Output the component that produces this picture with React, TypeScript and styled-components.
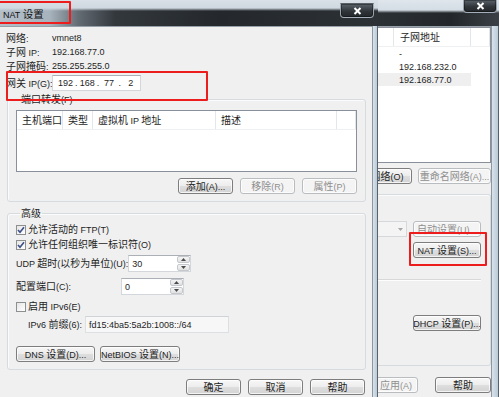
import styled, { createGlobalStyle } from "styled-components";

const GlobalStyle = createGlobalStyle`
  html, body { margin: 0; padding: 0; }
  * { box-sizing: border-box; }
  body {
    width: 499px;
    height: 397px;
    overflow: hidden;
    background: #f0f0f0;
    font-family: "Noto Sans CJK SC", "Liberation Sans", sans-serif;
    font-size: 10px;
    line-height: 12px;
    color: #1e1e1e;
  }
`;

const Desktop = styled.div`
  position: relative;
  display: flex;
  width: 499px;
  height: 397px;
  overflow: hidden;
`;

// latin runs are drawn smaller, like tahoma next to the cjk glyphs
const Latin = styled.span`
  font-family: "Liberation Sans", sans-serif;
  font-size: 9px;
`;

const CJK = /([\u2e80-\u9fff\uff00-\uffef]+)/;

function Txt({ children }: { children: string }) {
  const parts = children.split(CJK);
  return (
    <span>
      {parts.map((part, i) => {
        if (!part) return null;
        if (CJK.test(part)) return <span key={i}>{part}</span>;
        return <Latin key={i}>{part}</Latin>;
      })}
    </span>
  );
}

/* ---------- shared win7 controls ---------- */

const ButtonFace = styled.div<{ $w: number; $off?: boolean }>`
  width: ${(p) => p.$w}px;
  height: 16px;
  flex: none;
  display: flex;
  align-items: center;
  justify-content: center;
  white-space: nowrap;
  overflow: hidden;
  border: 1px solid ${(p) => (p.$off ? "#b9bdc0" : "#7d7d7d")};
  border-radius: 3px;
  color: ${(p) => (p.$off ? "#8f8f8f" : "#1e1e1e")};
  background: ${(p) =>
    p.$off
      ? "#f4f4f4"
      : "linear-gradient(to bottom, #f7f7f7 0%, #ededed 48%, #dedede 52%, #d3d3d3 100%)"};
  box-shadow: inset 0 0 0 1px rgba(255, 255, 255, 0.75);
`;

function Button({ w, off, label }: { w: number; off?: boolean; label: string }) {
  return (
    <ButtonFace $w={w} $off={off}>
      <Txt>{label}</Txt>
    </ButtonFace>
  );
}

const ButtonRow = styled.div<{ $gap: number; $top: number; $right?: number; $start?: boolean }>`
  display: flex;
  justify-content: ${(p) => (p.$start ? "flex-start" : "flex-end")};
  gap: ${(p) => p.$gap}px;
  margin-top: ${(p) => p.$top}px;
  padding-right: ${(p) => p.$right ?? 0}px;
`;

const Field = styled.div<{ $w: number; $ro?: boolean }>`
  width: ${(p) => p.$w}px;
  height: 17px;
  flex: none;
  display: flex;
  align-items: center;
  padding-left: 3px;
  border: 1px solid ${(p) => (p.$ro ? "#dcdfe3" : "#d3d7dc")};
  border-top-color: ${(p) => (p.$ro ? "#cfd3d8" : "#abafb6")};
  background: ${(p) => (p.$ro ? "#f7f7f7" : "#ffffff")};
  white-space: nowrap;
`;

const GroupBox = styled.fieldset<{ $top: number }>`
  margin: ${(p) => p.$top}px 0 0 1px;
  padding: 4px 8px 7px 8px;
  border: 1px solid #d6dbe0;
  border-radius: 3px;
  box-shadow: inset 1px 1px 0 #fbfbfb;
  min-width: 0;
`;

const Legend = styled.legend`
  margin-left: 4px;
  padding: 0 1px;
  line-height: 12px;
  font-size: 10px;
`;

/* ---------- NAT dialog ---------- */

const NatDialog = styled.div`
  width: 378px;
  flex: none;
  display: flex;
  flex-direction: column;
`;

const DialogTitle = styled.div`
  height: 26px;
  flex: none;
  display: flex;
  justify-content: space-between;
  align-items: flex-start;
  background:
    linear-gradient(to bottom, #d9e0e7 0px, #cfd8e0 8px, rgba(207, 216, 224, 0) 11px),
    linear-gradient(to right, #b3bec8 0px, #a6b2bc 50px, #646c74 78px, #33383d 115px, #24282c 220px, #2c3136 100%);
`;

const TitleText = styled.div`
  padding: 8px 0 0 3px;
  font-size: 10.5px;
  color: #111;
`;

const CloseBox = styled.div<{ $h: number; $top: number; $right: number }>`
  width: 34px;
  height: ${(p) => p.$h}px;
  margin: ${(p) => p.$top}px ${(p) => p.$right}px 0 0;
  display: flex;
  align-items: center;
  justify-content: center;
  border: 1px solid rgba(190, 202, 214, 0.75);
  border-top-color: rgba(190, 202, 214, 0.35);
  border-radius: 0 0 4px 4px;
  background: linear-gradient(to bottom, #5b636b 0%, #30353a 55%, #23272b 100%);
  box-shadow: inset 0 0 0 1px rgba(0, 0, 0, 0.35);
`;

const DialogBody = styled.div`
  flex: 1;
  display: flex;
`;

const Client = styled.div`
  width: 372px;
  flex: none;
  padding: 4px 6px 0 6px;
  border-top: 1px solid #98a1a9;
  background: #f0f0f0;
`;

const RightFrame = styled.div<{ $w: number }>`
  width: ${(p) => p.$w}px;
  flex: none;
  border-left: 1px solid #8e969e;
  border-right: 1px solid #59616a;
  background: linear-gradient(to right, #d7e2ec, #bccad6);
`;

const InfoGrid = styled.div`
  display: grid;
  grid-template-columns: 46px auto;
  grid-auto-rows: 14px;
  align-items: center;
  white-space: nowrap;
`;

const GatewayRow = styled.div`
  display: flex;
  align-items: center;
  margin-top: 2px;
  height: 16px;
`;

const GatewayLabel = styled.div`
  width: 46px;
  flex: none;
  white-space: nowrap;
`;

const IpBox = styled.div`
  width: 89px;
  height: 16px;
  display: flex;
  align-items: center;
  padding-left: 3px;
  border: 1px solid #d3d7dc;
  border-top-color: #abafb6;
  background: #fff;
`;

const IpPart = styled(Latin)`
  width: 19px;
  text-align: center;
`;

const IpDot = styled(Latin)`
  width: 3px;
  text-align: center;
`;

const ListView = styled.div`
  height: 62px;
  border: 1px solid #8a9099;
  background: #fff;
`;

const ListHeader = styled.div`
  display: flex;
  height: 19px;
  border-bottom: 1px solid #eef0f2;
`;

const HeaderCell = styled.div<{ $w?: number }>`
  width: ${(p) => (p.$w ? `${p.$w}px` : "auto")};
  flex: ${(p) => (p.$w ? "none" : 1)};
  display: flex;
  align-items: center;
  padding-left: 5px;
  border-right: 1px solid #e3e6ea;
  white-space: nowrap;
`;

const CheckRow = styled.div<{ $top: number }>`
  display: flex;
  align-items: center;
  gap: 2px;
  height: 13px;
  margin-top: ${(p) => p.$top}px;
  white-space: nowrap;
`;

const CheckBox = styled.div`
  width: 10px;
  height: 10px;
  flex: none;
  display: flex;
  align-items: center;
  justify-content: center;
  border: 1px solid #8e8f8f;
  background: linear-gradient(135deg, #e6e6e6, #ffffff);
`;

const SpinRow = styled.div<{ $top: number }>`
  display: flex;
  align-items: center;
  margin-top: ${(p) => p.$top}px;
  white-space: nowrap;
`;

const SpinLabel = styled.div`
  min-width: 105px;
  flex: none;
`;

const SpinBox = styled.div`
  width: 63px;
  display: flex;
  height: 17px;
  border: 1px solid #d3d7dc;
  border-top-color: #abafb6;
  background: #fff;
`;

const SpinText = styled(Latin)`
  flex: 1;
  padding: 2px 0 0 3px;
`;

const SpinArrows = styled.div`
  width: 13px;
  display: flex;
  flex-direction: column;
  gap: 1px;
`;

const SpinArrow = styled.div`
  flex: 1;
  display: flex;
  align-items: center;
  justify-content: center;
  border: 1px solid #c4c8cc;
  border-radius: 2px;
  background: linear-gradient(to bottom, #f5f5f5, #e1e1e1);
`;

const PrefixRow = styled.div`
  display: flex;
  align-items: center;
  gap: 3px;
  margin: 3px 0 0 12px;
  white-space: nowrap;
`;

/* ---------- background virtual network editor ---------- */

const EditorWindow = styled.div`
  flex: 1;
  display: flex;
  flex-direction: column;
  min-width: 0;
`;

const EditorTitle = styled.div`
  height: 26px;
  flex: none;
  display: flex;
  justify-content: flex-end;
  align-items: flex-start;
  background:
    linear-gradient(to bottom, #dfe6ec 0px, #d4dde5 10px, rgba(212, 221, 229, 0) 13px),
    linear-gradient(to right, #2b3035, #23272b 60%, #3a4046);
`;

const EditorBody = styled.div`
  flex: 1;
  display: flex;
  min-height: 0;
`;

const EditorClient = styled.div`
  width: 113px;
  flex: none;
  overflow: hidden;
  border-top: 1px solid #98a1a9;
  background: #f0f0f0;
`;

const NetList = styled.div`
  height: 136px;
  border: 1px solid #8a9099;
  border-left: none;
  background: #fff;
`;

const NetHeader = styled.div`
  display: grid;
  grid-template-columns: 1fr 77px 19px;
  height: 19px;
  border-bottom: 1px solid #eef0f2;
`;

const NetHeaderCell = styled.div`
  display: flex;
  align-items: center;
  padding-left: 6px;
  border-right: 1px solid #e3e6ea;
  white-space: nowrap;
`;

const NetRow = styled.div<{ $sel?: boolean }>`
  height: 13px;
  margin-right: 19px;
  padding-left: 21px;
  display: flex;
  align-items: center;
  background: ${(p) => (p.$sel ? "#efefef" : "transparent")};
  white-space: nowrap;
`;

const ClipRow = styled.div<{ $top: number; $gap: number }>`
  display: flex;
  justify-content: flex-end;
  gap: ${(p) => p.$gap}px;
  margin-top: ${(p) => p.$top}px;
`;

const InfoPanel = styled.div`
  height: 172px;
  margin-top: 10px;
  padding: 26px 9px 0 0;
  border: 1px solid #d6dbe0;
  border-left: none;
  border-radius: 0 3px 3px 0;
  box-shadow: inset 0 1px 0 #fbfbfb;
`;

const Combo = styled.div`
  width: 120px;
  height: 16px;
  flex: none;
  display: flex;
  justify-content: flex-end;
  align-items: center;
  padding-right: 3px;
  border: 1px solid #d6d9dc;
  background: #f4f4f4;
`;

const Separator = styled.div`
  height: 2px;
  margin-top: 21px;
  border-top: 1px solid #d8d8d8;
  border-bottom: 1px solid #fdfdfd;
`;

/* ---------- annotation marks ---------- */

const Mark = styled.div<{ $x: number; $y: number; $w: number; $h: number }>`
  position: absolute;
  left: ${(p) => p.$x}px;
  top: ${(p) => p.$y}px;
  width: ${(p) => p.$w}px;
  height: ${(p) => p.$h}px;
  border: 2px solid #ee1d1d;
  border-radius: 1px;
  pointer-events: none;
`;

function CloseGlyph() {
  return (
    <svg width="9" height="8" viewBox="0 0 9 8">
      <path d="M1.5 1 L7.5 7 M7.5 1 L1.5 7" stroke="#fff" strokeWidth="2" />
    </svg>
  );
}

function Tick() {
  return (
    <svg width="8" height="8" viewBox="0 0 8 8">
      <path d="M1 4 L3 6.3 L7 1.2" stroke="#3d4f86" strokeWidth="1.6" fill="none" />
    </svg>
  );
}

function Tri({ up, color = "#4b4b4b" }: { up?: boolean; color?: string }) {
  return (
    <svg width="5" height="3" viewBox="0 0 5 3">
      <path d={up ? "M0 3 L2.5 0 L5 3 Z" : "M0 0 L5 0 L2.5 3 Z"} fill={color} />
    </svg>
  );
}

function Spinner({ value }: { value: string }) {
  return (
    <SpinBox>
      <SpinText>{value}</SpinText>
      <SpinArrows>
        <SpinArrow>
          <Tri up />
        </SpinArrow>
        <SpinArrow>
          <Tri />
        </SpinArrow>
      </SpinArrows>
    </SpinBox>
  );
}

export default function App() {
  const ip = ["192", "168", "77", "2"];
  const info = [
    ["网络:", "vmnet8"],
    ["子网 IP:", "192.168.77.0"],
    ["子网掩码:", "255.255.255.0"],
  ];

  return (
    <>
      <GlobalStyle />
      <Desktop>
        <NatDialog>
          <DialogTitle>
            <TitleText>
              <Txt>NAT 设置</Txt>
            </TitleText>
            <CloseBox $h={15} $top={3} $right={4}>
              <CloseGlyph />
            </CloseBox>
          </DialogTitle>
          <DialogBody>
            <Client>
              <InfoGrid>
                {info.map(([k, v]) => (
                  <>
                    <Txt key={k}>{k}</Txt>
                    <Latin key={v}>{v}</Latin>
                  </>
                ))}
              </InfoGrid>
              <GatewayRow>
                <GatewayLabel>
                  <Txt>网关 IP(G):</Txt>
                </GatewayLabel>
                <IpBox>
                  {ip.map((part, i) => (
                    <>
                      <IpPart key={`p${i}`}>{part}</IpPart>
                      {i < ip.length - 1 && <IpDot key={`d${i}`}>.</IpDot>}
                    </>
                  ))}
                </IpBox>
              </GatewayRow>

              <GroupBox $top={2}>
                <Legend>
                  <Txt>端口转发(F)</Txt>
                </Legend>
                <ListView>
                  <ListHeader>
                    <HeaderCell $w={46}>主机端口</HeaderCell>
                    <HeaderCell $w={30}>类型</HeaderCell>
                    <HeaderCell $w={123}>
                      <Txt>虚拟机 IP 地址</Txt>
                    </HeaderCell>
                    <HeaderCell $w={121}>描述</HeaderCell>
                    <HeaderCell />
                  </ListHeader>
                </ListView>
                <ButtonRow $gap={7} $top={6}>
                  <Button w={55} label="添加(A)..." />
                  <Button w={55} off label="移除(R)" />
                  <Button w={55} off label="属性(P)" />
                </ButtonRow>
              </GroupBox>

              <GroupBox $top={5}>
                <Legend>高级</Legend>
                <CheckRow $top={0}>
                  <CheckBox>
                    <Tick />
                  </CheckBox>
                  <Txt>允许活动的 FTP(T)</Txt>
                </CheckRow>
                <CheckRow $top={2}>
                  <CheckBox>
                    <Tick />
                  </CheckBox>
                  <Txt>允许任何组织唯一标识符(O)</Txt>
                </CheckRow>
                <SpinRow $top={4}>
                  <SpinLabel>
                    <Txt>UDP 超时(以秒为单位)(U):</Txt>
                  </SpinLabel>
                  <Spinner value="30" />
                </SpinRow>
                <SpinRow $top={6}>
                  <SpinLabel>
                    <Txt>配置端口(C):</Txt>
                  </SpinLabel>
                  <Spinner value="0" />
                </SpinRow>
                <CheckRow $top={5}>
                  <CheckBox />
                  <Txt>启用 IPv6(E)</Txt>
                </CheckRow>
                <PrefixRow>
                  <Txt>IPv6 前缀(6):</Txt>
                  <Field $w={144} $ro>
                    <Latin>fd15:4ba5:5a2b:1008::/64</Latin>
                  </Field>
                </PrefixRow>
                <ButtonRow $gap={5} $top={13} $start>
                  <Button w={79} label="DNS 设置(D)..." />
                  <Button w={80} label="NetBIOS 设置(N)..." />
                </ButtonRow>
              </GroupBox>

              <ButtonRow $gap={7} $top={9} $right={1}>
                <Button w={55} label="确定" />
                <Button w={55} label="取消" />
                <Button w={55} label="帮助" />
              </ButtonRow>
            </Client>
            <RightFrame $w={6} />
          </DialogBody>
        </NatDialog>

        <EditorWindow>
          <EditorTitle>
            <CloseBox $h={14} $top={-1} $right={2}>
              <CloseGlyph />
            </CloseBox>
          </EditorTitle>
          <EditorBody>
            <EditorClient>
              <NetList>
                <NetHeader>
                  <NetHeaderCell />
                  <NetHeaderCell>子网地址</NetHeaderCell>
                  <NetHeaderCell />
                </NetHeader>
                <NetRow>
                  <Latin>-</Latin>
                </NetRow>
                <NetRow>
                  <Latin>192.168.232.0</Latin>
                </NetRow>
                <NetRow $sel>
                  <Latin>192.168.77.0</Latin>
                </NetRow>
              </NetList>
              <ClipRow $top={5} $gap={6}>
                <Button w={70} label="移除网络(O)" />
                <Button w={73} off label="重命名网络(A)..." />
              </ClipRow>
              <InfoPanel>
                <ClipRow $top={0} $gap={6}>
                  <Combo>
                    <Tri color="#a6a6a6" />
                  </Combo>
                  <Button w={68} off label="自动设置(U)..." />
                </ClipRow>
                <ClipRow $top={5} $gap={0}>
                  <Button w={68} label="NAT 设置(S)..." />
                </ClipRow>
                <Separator />
                <ClipRow $top={34} $gap={0}>
                  <Button w={68} label="DHCP 设置(P)..." />
                </ClipRow>
              </InfoPanel>
              <ClipRow $top={11} $gap={17}>
                <Button w={44} off label="应用(A)" />
                <Button w={56} label="帮助" />
              </ClipRow>
            </EditorClient>
            <RightFrame $w={8} />
          </EditorBody>
        </EditorWindow>

        <Mark $x={-3} $y={1} $w={74} $h={23} />
        <Mark $x={6} $y={71} $w={202} $h={30} />
        <Mark $x={409} $y={232} $w={78} $h={34} />
      </Desktop>
    </>
  );
}
